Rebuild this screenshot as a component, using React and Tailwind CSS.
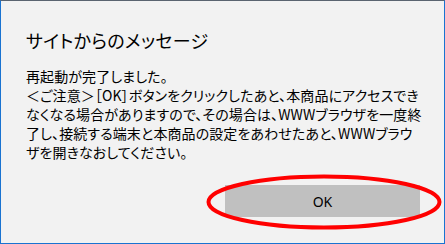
import React from 'react';

const lines = [
    '再起動が完了しました。',
    '＜ご注意＞［OK］ボタンをクリックしたあと、本商品にアクセスでき',
    'なくなる場合がありますので、その場合は、WWWブラウザを一度終',
    '了し、接続する端末と本商品の設定をあわせたあと、WWWブラウ',
    'ザを開きなおしてください。',
];

export default function App() {
    return (
        <div className="w-[445px] h-[244px] bg-[#f2f2f2] border border-[#1a73d1] border-t-[#5a6470] flex flex-col text-black [font-family:'Noto_Sans_CJK_JP',sans-serif] [font-feature-settings:'palt']">
            <h1 className="pl-[25px] pt-[27px] text-[18px] leading-[24px] tracking-[0.3px] font-normal">サイトからのメッセージ</h1>
            <div className="pl-[25px] pt-[15px] text-[14px] leading-[19px] tracking-[0.1px]">
                {lines.map(line => (
                    <p key={line} className="whitespace-nowrap">{line}</p>
                ))}
            </div>
            <div className="flex justify-end pr-[24px] pt-[23px]">
                <div className="relative">
                    <button className="w-[195px] h-[32px] bg-[#c0c0c0] text-[14px] [font-family:'Noto_Sans',sans-serif]">OK</button>
                    <svg className="absolute left-[-19px] top-[-11px] pointer-events-none" width="236" height="56" viewBox="0 0 236 56">
                        <ellipse cx="118" cy="28" rx="115.5" ry="25.5" fill="none" stroke="#ff0000" strokeWidth="4" />
                    </svg>
                </div>
            </div>
        </div>
    );
}
